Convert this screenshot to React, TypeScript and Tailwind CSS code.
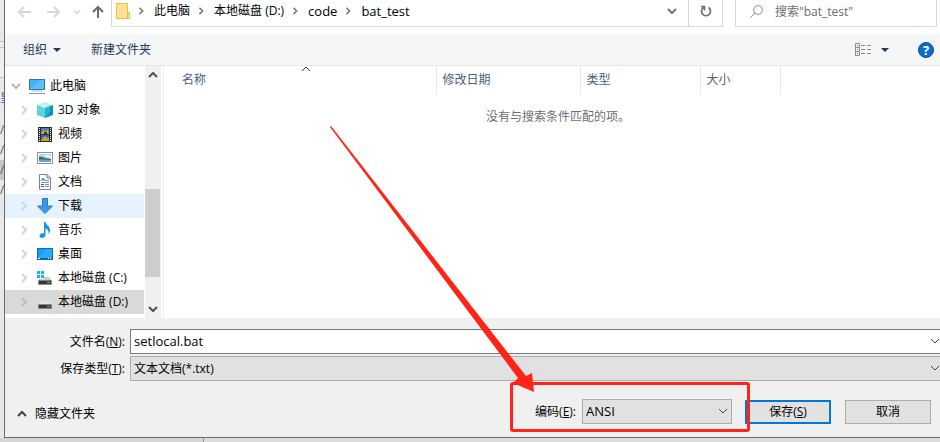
import React from "react";

type IconProps = { className?: string };

function Chevron({
  dir,
  className = "",
  width = 2,
}: {
  dir: "right" | "down" | "up";
  className?: string;
  width?: number;
}) {
  const d = {
    right: "M3 1 L7 5 L3 9",
    down: "M1 3 L5 7 L9 3",
    up: "M1 7 L5 3 L9 7",
  }[dir];
  return (
    <svg viewBox="0 0 10 10" className={`shrink-0 ${className}`} fill="none" stroke="currentColor" strokeWidth={width} aria-hidden="true">
      <path d={d} />
    </svg>
  );
}

function Caret({ className = "" }: IconProps) {
  return (
    <svg viewBox="0 0 8 4" className={`h-1 w-2 shrink-0 text-[#1e395b] ${className}`} fill="currentColor" aria-hidden="true">
      <path d="M0 0H8L4 4Z" />
    </svg>
  );
}

function Svg({ children }: { children: React.ReactNode }) {
  return (
    <svg viewBox="0 0 16 16" className="size-4 shrink-0" aria-hidden="true">
      {children}
    </svg>
  );
}

const ComputerIcon = () => (
  <Svg>
    <rect x="0.5" y="1.5" width="15" height="10" fill="#3fb4fb" stroke="#38789f" />
    <path d="M1 11L11 2H15V11Z" fill="#6cc8ff" opacity=".6" />
    <path d="M3 13H13" stroke="#a8b9c6" />
    <path d="M0 15.5H16" stroke="#7d95a6" />
  </Svg>
);

const CubeIcon = () => (
  <Svg>
    <path d="M0 3L8 0L16 3L8 6Z" fill="#b9f1f5" />
    <path d="M0 3L8 6V16L0 13Z" fill="#5ed3df" />
    <path d="M16 3L8 6V16L16 13Z" fill="#0f93bd" />
    <path d="M3 4L8 2L13 4L8 6Z" fill="#c8f4f7" />
    <path d="M8 6L13 4V10L8 16Z" fill="#22b5d6" />
  </Svg>
);

const VideoIcon = () => (
  <Svg>
    <rect x="1" y="1" width="14" height="15" fill="#2b2b2b" />
    <rect x="4" y="2" width="8" height="6" fill="#3f7fd0" />
    <rect x="4" y="9" width="8" height="6" fill="#3566b8" />
    <path d="M4 7L7 4L9 6L11 3L12 8H4Z" fill="#d9a928" />
    <path d="M4 14L8 10L10 12L12 11V15H4Z" fill="#c8a23c" />
    <path d="M7 6H10V8H7Z" fill="#5a3020" />
    <path d="M2.5 2V16M13.5 2V16" stroke="#fff" strokeDasharray="1 1" />
  </Svg>
);

const PictureIcon = () => (
  <Svg>
    <rect x="0.5" y="2.5" width="15" height="11" fill="#fff" stroke="#8f8f8f" />
    <rect x="2" y="4" width="12" height="8" fill="#a9d8f7" />
    <path d="M2 7C5 6 8 9 14 9V12H2Z" fill="#3a6a70" />
    <path d="M2 10C6 9 10 10 14 10V12H2Z" fill="#6fa3cc" />
    <path d="M7 5L11 5L14 7V8L10 7Z" fill="#fff" />
  </Svg>
);

const DocumentIcon = () => (
  <Svg>
    <path d="M2.5 0.5H10L13.5 4V15.5H2.5Z" fill="#fff" stroke="#7f7f7f" />
    <path d="M10 0.5V4H13.5" fill="none" stroke="#7f7f7f" />
    <path d="M4 7L6 4L7 7M5 5.5H8" fill="none" stroke="#2f8fd0" />
    <path d="M8 6.5H12M4 8.5H12M8 10.5H12M8 12.5H12" stroke="#5f9cc8" />
    <path d="M4 10.5H7M4 12.5H7" stroke="#555" />
  </Svg>
);

const DownloadIcon = () => (
  <Svg>
    <path d="M5.5 0.5H10.5V8H15.5L8 15.5L0.5 8H5.5Z" fill="#3b97e8" stroke="#2a78c2" />
  </Svg>
);

const MusicIcon = () => (
  <Svg>
    <path d="M7 0H8.5C9 3 13 4 13 8C13 9.5 12.5 11 11.5 12C12 8.5 10.5 7 8.5 6.5V13C8.5 15 6.5 16 5 16C3.5 16 2.5 15 2.5 13.8C2.5 12 4.5 10.8 7 11.3Z" fill="#1096e8" />
  </Svg>
);

const DesktopIcon = () => (
  <Svg>
    <rect x="0.5" y="2.5" width="15" height="11" fill="#14a0fa" stroke="#1668a5" />
    <path d="M1 12L10 3H15V12Z" fill="#3bb3ff" opacity=".6" />
    <path d="M1 12.5H15" stroke="#0f5d98" />
    <path d="M1 12.5H3M11 12.5H12M13 12.5H14" stroke="#fff" />
  </Svg>
);

const DriveIcon = ({ system = false }: { system?: boolean }) => (
  <Svg>
    {system && <path d="M0 1H3V4H0ZM4 1H7V4H4ZM0 5H3V8H0ZM4 5H7V8H4Z" fill="#12b5f5" />}
    <path d={system ? "M7 7H12L15 11H2V9H7Z" : "M4 7H12L15 11H1Z"} fill={system ? "#cdcdcd" : "#e4e4e4"} />
    <rect x="1.5" y="10.5" width="13" height="4" fill="#353535" stroke="#8a8a8a" strokeWidth=".5" />
    <path d="M10 12.5H13" stroke="#45e052" />
  </Svg>
);

const folders: { name: string; icon: React.ReactNode; state?: "hover" | "selected" }[] = [
  { name: "3D 对象", icon: <CubeIcon /> },
  { name: "视频", icon: <VideoIcon /> },
  { name: "图片", icon: <PictureIcon /> },
  { name: "文档", icon: <DocumentIcon /> },
  { name: "下载", icon: <DownloadIcon />, state: "hover" },
  { name: "音乐", icon: <MusicIcon /> },
  { name: "桌面", icon: <DesktopIcon /> },
  { name: "本地磁盘 (C:)", icon: <DriveIcon system /> },
  { name: "本地磁盘 (D:)", icon: <DriveIcon />, state: "selected" },
];

const rowColour = { hover: "bg-[#e5f3ff]", selected: "bg-[#d9d9d9]", none: "" };

function BackgroundWindow() {
  return (
    <div className="w-1 shrink-0 overflow-hidden bg-[#e6e8ea] text-xs leading-5 text-[#555]" aria-hidden="true">
      <div className="h-[42px] border-b border-[#c4c4c4]" />
      <div className="h-1.5 border-b border-[#c4c4c4] bg-[#eeeeee]" />
      <div className="h-[30px] border-b border-[#c8c8c8] bg-[#f0f0f0]" />
      <div className="h-[42px] pt-2.5 text-[#2b6cb0]">皇</div>
      <div className="h-5">/i</div>
      <div className="h-5">/i</div>
      <div className="h-5 bg-[#c6c6c6]">/i</div>
      <div className="h-5">/i</div>
    </div>
  );
}

function AddressBar() {
  const crumbs = ["此电脑", "本地磁盘 (D:)", "code", "bat_test"];
  return (
    <div className="flex h-[27px] items-stretch">
      <div className="flex w-[106px] shrink-0 items-center pb-1 pl-3">
        <button aria-label="后退" className="text-[#d8d8d8]">
          <svg viewBox="0 0 14 12" className="h-3 w-3.5" fill="none" stroke="currentColor" strokeWidth="2"><path d="M7 1L2 6L7 11M2 6H14" /></svg>
        </button>
        <button aria-label="前进" className="ml-4 text-[#d8d8d8]">
          <svg viewBox="0 0 14 12" className="h-3 w-3.5" fill="none" stroke="currentColor" strokeWidth="2"><path d="M7 1L12 6L7 11M12 6H0" /></svg>
        </button>
        <button aria-label="最近浏览的位置" className="ml-3 text-[#d8d8d8]">
          <Chevron dir="down" className="size-2" />
        </button>
        <button aria-label="上移" className="ml-[11px] text-[#6b6b6b]">
          <svg viewBox="0 0 12 14" className="h-3.5 w-3" fill="none" stroke="currentColor" strokeWidth="2"><path d="M1 7L6 2L11 7M6 2V13" /></svg>
        </button>
      </div>
      <nav className="flex min-w-0 flex-1 items-center border-b border-l border-[#d9d9d9] pb-1 pl-1" aria-label="路径">
        <svg viewBox="0 0 14 16" className="h-4 w-3.5 shrink-0" aria-hidden="true">
          <path d="M0.5 0.5H11.5V9.5H13.5V15.5H0.5Z" fill="#ffe394" stroke="#e9bf45" />
          <path d="M11.5 10V15" stroke="#e9bf45" />
        </svg>
        {crumbs.map((c) => (
          <React.Fragment key={c}>
            <Chevron dir="right" className="ml-[7px] size-2 text-[#777]" />
            <button className={/^[a-z]/.test(c) ? "ml-[9px] whitespace-nowrap text-[13px]" : "ml-[9px] whitespace-nowrap"}>{c}</button>
          </React.Fragment>
        ))}
        <button aria-label="以前的位置" className="mr-[11px] ml-auto text-[#777]">
          <Chevron dir="down" className="size-2.5" />
        </button>
      </nav>
      <button aria-label="刷新" className="flex w-[35px] shrink-0 items-center justify-center border-x border-b border-[#d9d9d9] pb-1 text-[#6b6b6b]">
        <svg viewBox="0 0 12 12" className="size-3" fill="none" stroke="currentColor" strokeWidth="1.6">
          <path d="M8.5 2.5A4.5 4.5 0 1 1 3.5 2.5M1 1.5H4.5V5.5" />
        </svg>
      </button>
      <label className="mr-[3px] ml-3 flex w-[202px] shrink-0 items-center border-x border-b border-[#d9d9d9] pb-[3px] pl-3.5">
        <svg viewBox="0 0 13 13" className="size-[13px] shrink-0" fill="none" stroke="#948a94" aria-hidden="true">
          <circle cx="8" cy="5" r="4.3" /><path d="M5 8L0.5 12.5" />
        </svg>
        <input aria-label="搜索" placeholder={'搜索"bat_test"'} className="ml-3 min-w-0 flex-1 bg-transparent outline-none placeholder:text-[#6d6d6d]" />
      </label>
    </div>
  );
}

function Toolbar() {
  return (
    <div className="mt-[7px] flex h-8 items-center border-b border-[#e5e5e5] bg-[#f5f6f7] pr-1.5 pl-[18px] text-[#1e395b]">
      <button className="flex items-center gap-1.5">组织 <Caret /></button>
      <button className="ml-[30px]">新建文件夹</button>
      <button aria-label="更改视图" className="ml-auto flex items-center gap-2.5">
        <svg viewBox="0 0 16 13" className="h-[13px] w-4" fill="none">
          <path d="M0.5 0.5H4.5V12.5H0.5ZM0.5 4.5H4.5M0.5 8.5H4.5" stroke="#8c8c8c" />
          <path d="M6 2.5H10M12 2.5H16M6 6.5H10M12 6.5H16M6 10.5H10M12 10.5H16" stroke="#8c8c8c" />
          <path d="M2 2.5H3" stroke="#777" /><path d="M2 6.5H3" stroke="#3b8ad8" /><path d="M2 10.5H3" stroke="#b33c2e" />
        </svg>
        <Caret />
      </button>
      <button aria-label="帮助" className="ml-[29px] flex size-4 items-center justify-center rounded-full border border-[#0b4f94] bg-[#0a6ccf] text-[13px] leading-4 font-bold text-white">?</button>
    </div>
  );
}

function FolderTree() {
  return (
    <div className="flex shrink-0">
      <ul className="w-[139px] pt-2 pb-1">
        <li className="flex h-6 items-center pl-1.5">
          <Chevron dir="down" className="size-2.5 text-[#b5b5b5]" />
          <span className="mr-[5px] ml-2"><ComputerIcon /></span>
          此电脑
        </li>
        {folders.map((f) => (
          <li key={f.name} className={`flex h-6 items-center pl-3.5 whitespace-nowrap ${rowColour[f.state ?? "none"]}`}>
            <Chevron dir="right" className={f.state === "selected" ? "size-2.5 text-[#bdbdbd]" : "size-2.5 text-[#d5d5d5]"} />
            <span className="mr-[5px] ml-2">{f.icon}</span>
            {f.name}
          </li>
        ))}
      </ul>
      <div className="ml-px flex w-4 flex-col items-center bg-[#f0f0f0] text-[#505050]">
        <div className="flex h-[18px] items-center"><Chevron dir="up" className="size-2.5" /></div>
        <div className="flex-1" />
        <div className="h-[88px] w-full border-r border-[#f0f0f0] bg-[#cdcdcd]" />
        <div className="h-[23px]" />
        <div className="flex h-[18px] items-center"><Chevron dir="down" className="size-2.5" /></div>
      </div>
      <div className="ml-0.5 w-px bg-[#f0f0f0]" />
    </div>
  );
}

function FileList() {
  return (
    <div className="min-w-0 flex-1 pl-3">
      <table className="w-full table-fixed border-collapse text-left">
        <colgroup>
          <col className="w-[260px]" />
          <col className="w-36" />
          <col className="w-[120px]" />
          <col className="w-20" />
          <col />
        </colgroup>
        <thead className="text-[#4c607a]">
          <tr className="h-7">
            <th className="relative border-r border-[#e5e5e5] pl-1.5 font-normal">
              <Chevron dir="up" width={1} className="absolute -top-0.5 left-1/2 size-2.5 -translate-x-1/2 text-[#333]" />
              名称
            </th>
            <th className="border-r border-[#e5e5e5] pl-1.5 font-normal">修改日期</th>
            <th className="border-r border-[#e5e5e5] pl-1.5 font-normal">类型</th>
            <th className="border-r border-[#e5e5e5] pl-1.5 font-normal">大小</th>
            <td />
          </tr>
        </thead>
        <tbody>
          <tr>
            <td colSpan={5} className="pt-[15px] text-center text-[#6d6d6d]">没有与搜索条件匹配的项。</td>
          </tr>
        </tbody>
      </table>
    </div>
  );
}

function FormFields() {
  return (
    <div className="grid grid-cols-[120px_1fr] items-center gap-x-[5px] gap-y-0.5 pt-[11px]">
      <label htmlFor="filename" className="text-right">文件名(<u>N</u>):</label>
      <div className="relative">
        <input id="filename" defaultValue="setlocal.bat" className="block h-[25px] w-full border border-r-0 border-[#7a7a7a] bg-white pb-0.5 pl-[3px] text-[13px] outline-none" />
        <Chevron dir="down" width={1} className="pointer-events-none absolute top-[7px] right-0 size-2.5 text-[#444]" />
      </div>
      <label htmlFor="filetype" className="text-right">保存类型(<u>T</u>):</label>
      <div className="relative">
        <select id="filetype" className="block h-[25px] w-full appearance-none border border-r-0 border-[#adadad] bg-[#e1e1e1] pl-[3px] outline-none">
          <option>文本文档(*.txt)</option>
        </select>
        <Chevron dir="down" width={1} className="pointer-events-none absolute top-[7px] right-0 size-2.5 text-[#444]" />
      </div>
    </div>
  );
}

function Annotation() {
  return (
    <div className="pointer-events-none absolute -top-[17px] -right-[18px] z-10 h-[50px] w-60 rounded-[3px] border-[3px] border-[#ff2415]" aria-hidden="true">
      <svg viewBox="0 0 210 270" className="absolute -top-[259px] -left-[183px] h-[270px] w-[210px]" fill="#ff2415">
        <path d="M0 1L1 0L196 250L202 247L204 266L183 257L188 252Z" />
      </svg>
    </div>
  );
}

function Actions() {
  return (
    <div className="mt-[18px] flex items-center pr-[9px] pb-[13px]">
      <button className="flex items-center gap-2 pt-1 pl-3">
        <Chevron dir="up" className="size-2.5 text-[#444]" />
        隐藏文件夹
      </button>
      <div className="relative ml-auto flex items-center gap-1.5">
        <Annotation />
        <label htmlFor="encoding">编码(<u>E</u>):</label>
        <div className="relative">
          <select id="encoding" className="block h-[25px] w-[150px] appearance-none border border-[#adadad] bg-[#e1e1e1] pb-0.5 pl-[3px] text-[13px] outline-none">
            <option>ANSI</option>
          </select>
          <Chevron dir="down" width={1} className="pointer-events-none absolute top-[7px] right-1 size-2.5 text-[#444]" />
        </div>
      </div>
      <button className="ml-[13px] h-6 w-[86px] border-2 border-[#0078d7] bg-[#e1e1e1]">保存(<u>S</u>)</button>
      <button className="ml-3.5 h-6 w-[86px] border border-[#adadad] bg-[#e1e1e1]">取消</button>
    </div>
  );
}

export default function App() {
  return (
    <div className="min-h-screen bg-[#dcdcdc] font-['Open_Sans','Noto_Sans_CJK_SC',sans-serif] text-xs leading-4 text-black">
      <div className="flex overflow-hidden">
        <BackgroundWindow />
        <main className="min-w-0 flex-1 border-b border-l border-[#6a6a6a] bg-white">
          <AddressBar />
          <Toolbar />
          <div className="flex">
            <FolderTree />
            <FileList />
          </div>
          <section className="bg-[#f0f0f0]" aria-label="保存选项">
            <FormFields />
            <Actions />
          </section>
        </main>
      </div>
      <div className="flex h-1">
        <div className="w-[204px] border-r border-[#999] bg-[#d6d6d6]" />
      </div>
    </div>
  );
}
